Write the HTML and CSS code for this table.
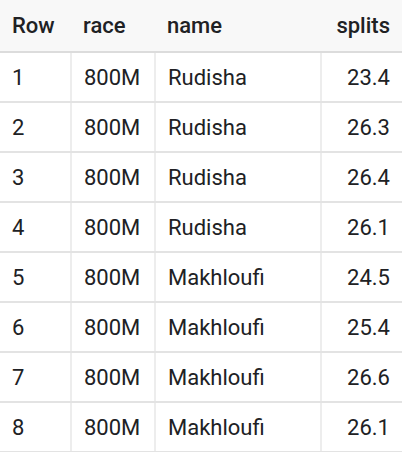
FILE: index.html
```html
<!DOCTYPE html>
<html>
<head>
<meta charset="utf-8">
<link rel="stylesheet" href="styles.css">
</head>
<body>
<table class="grid">
  <colgroup>
    <col class="c-row"><col class="c-race"><col class="c-name"><col class="c-splits">
  </colgroup>
  <thead>
    <tr><th>Row</th><th>race</th><th>name</th><th class="num">splits</th></tr>
  </thead>
  <tbody>
    <tr><td>1</td><td>800M</td><td>Rudisha</td><td class="num">23.4</td></tr>
    <tr><td>2</td><td>800M</td><td>Rudisha</td><td class="num">26.3</td></tr>
    <tr><td>3</td><td>800M</td><td>Rudisha</td><td class="num">26.4</td></tr>
    <tr><td>4</td><td>800M</td><td>Rudisha</td><td class="num">26.1</td></tr>
    <tr><td>5</td><td>800M</td><td>Makhloufi</td><td class="num">24.5</td></tr>
    <tr><td>6</td><td>800M</td><td>Makhloufi</td><td class="num">25.4</td></tr>
    <tr><td>7</td><td>800M</td><td>Makhloufi</td><td class="num">26.6</td></tr>
    <tr><td>8</td><td>800M</td><td>Makhloufi</td><td class="num">26.1</td></tr>
  </tbody>
</table>
</body>
</html>
```
FILE: styles.css
```css
html, body {
  margin: 0;
  padding: 0;
  background: #ffffff;
}
body {
  font-family: Roboto, "Liberation Sans", Arial, sans-serif;
  color: #202124;
  font-size: 22px;
}
.grid {
  border-collapse: collapse;
  table-layout: fixed;
  width: 402px;
}
.c-row { width: 71px; }
.c-race { width: 84px; }
.c-name { width: 166px; }
.c-splits { width: 81px; }
.grid th {
  background: #f8f8f8;
  font-weight: 500;
  text-align: left;
  height: 52px;
  padding: 0 12px;
  border-bottom: 2px solid #dcdcdc;
  box-sizing: border-box;
}
.grid td {
  height: 48px;
  padding: 0 12px;
  border-bottom: 2px solid #e3e3e3;
  border-left: 2px solid #ededed;
}
.grid td:first-child {
  border-left: none;
}
.grid .num {
  text-align: right;
}
```
